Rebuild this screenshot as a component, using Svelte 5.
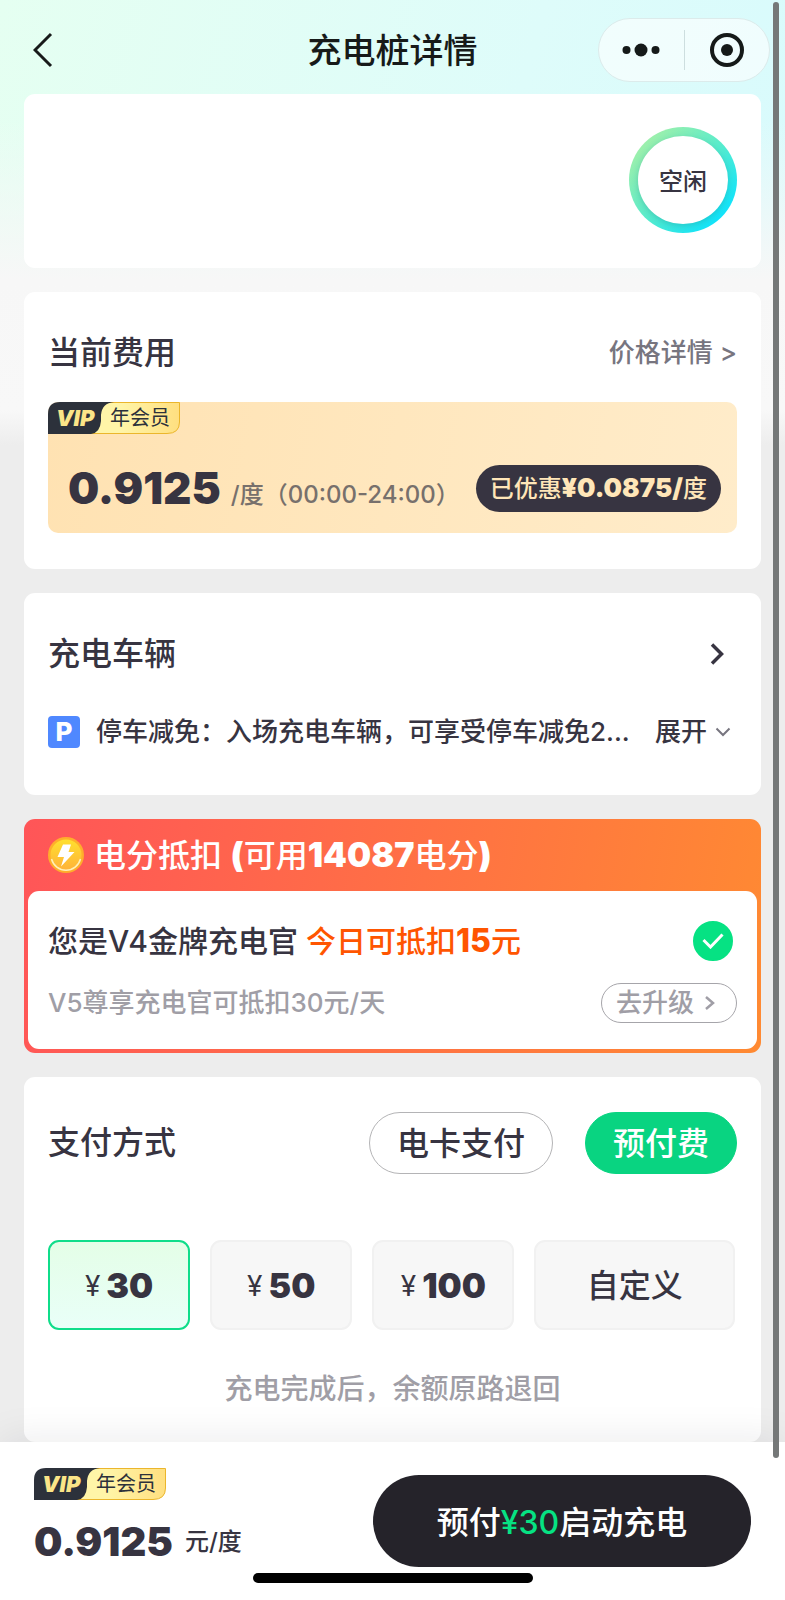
<script lang="ts">
  export let price: string = "0.9125";
  export let discount: string = "0.0875";
  export let points: number = 14087;

  const amounts: Array<number> = [30, 50, 100];
  const methods: Array<string> = ["电卡支付", "预付费"];

  let amount: number = 30;
  let method: string = "预付费";
  let usePoints: boolean = true;
</script>

{#snippet vipBadge()}
  <span class="badge">
    <svg class="badge-bg" viewBox="0 0 132 32" aria-hidden="true">
      <defs>
        <linearGradient id="badge-gold" x1="0" x2="1">
          <stop offset="0.35" stop-color="#fff5a8" />
          <stop offset="1" stop-color="#ffdf80" />
        </linearGradient>
      </defs>
      <path d="M40 .5H131.500V20Q131.500 31.500 119 31.500H40Z" fill="url(#badge-gold)" stroke="#ebb62c" />
      <path d="M12 0H66Q54 1 53 13V19Q52 31 43 32H0V12Q0 0 12 0Z" fill="#2c313b" />
    </svg>
    <b>VIP</b>
    <span class="badge-label">年会员</span>
  </span>
{/snippet}

<div class="page">
  <header>
    <button class="back" aria-label="返回">
      <svg width="20" height="36" viewBox="0 0 20 36"><path d="M18 2L2 18L18 34" fill="none" stroke="#171a19" stroke-width="3" /></svg>
    </button>
    <h1>充电桩详情</h1>
    <div class="capsule">
      <button aria-label="更多">
        <svg width="38" height="14" viewBox="0 0 38 14" fill="#151a19">
          <circle cx="4.500" cy="7" r="4" />
          <circle cx="19" cy="7" r="6.500" />
          <circle cx="33.500" cy="7" r="4" />
        </svg>
      </button>
      <i></i>
      <button aria-label="关闭">
        <svg width="36" height="36" viewBox="0 0 36 36">
          <circle cx="18" cy="18" r="15" fill="none" stroke="#151a19" stroke-width="4" />
          <circle cx="18" cy="18" r="6" fill="#151a19" />
        </svg>
      </button>
    </div>
  </header>

  <main>
    <section class="card status">
      <div class="ring"><span>空闲</span></div>
    </section>

    <section class="card fee">
      <div class="row">
        <h2>当前费用</h2>
        <a class="detail" href="#price">价格详情 &gt;</a>
      </div>
      <div class="gold">
        {@render vipBadge()}
        <div class="gold-row">
          <strong>{price}</strong>
          <span class="period">/度（00:00-24:00）</span>
          <span class="saved">已优惠<b>¥{discount}/</b>度</span>
        </div>
      </div>
    </section>

    <section class="card car">
      <div class="row">
        <h2>充电车辆</h2>
        <button class="go" aria-label="选择车辆">
          <svg width="14" height="22" viewBox="0 0 14 22"><path d="M2 1.500L11.500 11L2 20.500" fill="none" stroke="#373441" stroke-width="3.500" /></svg>
        </button>
      </div>
      <div class="parking">
        <span class="p-icon">P</span>
        <p>停车减免：入场充电车辆，可享受停车减免2...</p>
        <button class="expand">
          展开
          <svg width="16" height="10" viewBox="0 0 16 10"><path d="M1.500 1.500L8 8L14.500 1.500" fill="none" stroke="#77757f" stroke-width="2" /></svg>
        </button>
      </div>
    </section>

    <section class="points">
      <div class="points-head">
        <svg width="36" height="36" viewBox="0 0 36 36" aria-hidden="true">
          <defs>
            <linearGradient id="coin" x1="0" y1="0" x2="0" y2="1">
              <stop offset="0" stop-color="#ffe02e" />
              <stop offset="1" stop-color="#ffb23a" />
            </linearGradient>
          </defs>
          <circle cx="18" cy="18" r="18" fill="#ffae2b" />
          <circle cx="18" cy="18" r="15.500" fill="url(#coin)" />
          <path d="M3.500 22A15 15 0 0 0 32.500 22" fill="none" stroke="#fff0b8" stroke-width="1.500" />
          <path d="M15 7.500H23L20.500 15H26.500L13 29.500L16 20H9.500Z" fill="#fff" />
        </svg>
        <h2>电分抵扣 <b>(</b>可用<b>{points}</b>电分<b>)</b></h2>
      </div>
      <div class="points-body">
        <div class="row">
          <label for="use-points">您是V4金牌充电官 <em>今日可抵扣<b>15</b>元</em></label>
          <span class="check">
            <input id="use-points" type="checkbox" bind:checked={usePoints} />
            {#if usePoints}
              <svg width="22" height="16" viewBox="0 0 22 16"><path d="M1.500 7L8.500 14L20.500 1.500" fill="none" stroke="#fff" stroke-width="3" /></svg>
            {/if}
          </span>
        </div>
        <div class="row next">
          <span>V5尊享充电官可抵扣30元/天</span>
          <button class="upgrade">
            去升级
            <svg width="12" height="14" viewBox="0 0 12 14"><path d="M2 1L9 7L2 13" fill="none" stroke="#a09ea6" stroke-width="2.500" /></svg>
          </button>
        </div>
      </div>
    </section>

    <section class="card pay">
      <div class="row">
        <h2>支付方式</h2>
        <div class="methods">
          {#each methods as m}
            <button class:isActive={method === m} on:click={() => (method = m)}>{m}</button>
          {/each}
        </div>
      </div>
      <div class="amounts">
        {#each amounts as value (value)}
          <button class:isActive={amount === value} on:click={() => (amount = value)}>
            <span>¥</span><b>{value}</b>
          </button>
        {/each}
        <button class="custom">自定义</button>
      </div>
      <p class="hint">充电完成后，余额原路退回</p>
    </section>
  </main>

  <footer>
    <div class="footer-row">
      <div class="total">
        {@render vipBadge()}
        <div class="total-price"><strong>{price}</strong><span>元/度</span></div>
      </div>
      <button class="start">预付<span>¥{amount}</span>启动充电</button>
    </div>
    <div class="home-bar"></div>
  </footer>

  <div class="scrollbar"></div>
</div>

<style>
  :global(body) {
    margin: 0;
    background: #ededed;
  }

  .page {
    min-height: 100vh;
    display: flex;
    flex-direction: column;
    font-family: Inter, "Noto Sans CJK SC", sans-serif;
    font-weight: 500;
    color: #373441;
    background:
      linear-gradient(to bottom, rgba(247, 247, 247, 0) 120px, #f7f7f7 280px, #f8f8f8 410px, #ededed 445px),
      linear-gradient(105deg, #e5fff1 0%, #defcfa 45%, #d2f9ff 100%);
  }

  button {
    border: 0;
    padding: 0;
    background: transparent;
    font: inherit;
    color: inherit;
    cursor: pointer;
  }

  svg {
    display: block;
    flex: none;
  }

  h1,
  h2,
  p {
    margin: 0;
    font-weight: 500;
  }

  h2 {
    font-size: 32px;
    line-height: 46px;
  }

  /* top bar */
  header {
    display: grid;
    grid-template-columns: 1fr auto 1fr;
    align-items: center;
    height: 64px;
    padding: 18px 15px 12px 33px;
  }

  .back {
    justify-self: start;
  }

  h1 {
    font-size: 34px;
    line-height: 48px;
    color: #171a19;
    padding: 2px 18px 0 0;
  }

  .capsule {
    justify-self: end;
    display: flex;
    align-items: center;
    box-sizing: border-box;
    width: 172px;
    height: 64px;
    border: 1px solid #dcebeb;
    border-radius: 32px;
    background: rgba(255, 255, 255, 0.6);
  }

  .capsule button {
    flex: 1;
    display: flex;
    justify-content: center;
  }

  .capsule i {
    width: 1px;
    height: 40px;
    background: #cddedf;
  }

  /* cards */
  main {
    flex: 1;
    display: flex;
    flex-direction: column;
    gap: 24px;
    padding: 0 24px;
  }

  .card {
    background: #fff;
    border-radius: 11px;
    padding: 0 24px;
  }

  .row {
    display: flex;
    align-items: center;
    justify-content: space-between;
  }

  .status {
    display: flex;
    justify-content: flex-end;
    padding-top: 33px;
    padding-bottom: 35px;
  }

  .ring {
    box-sizing: border-box;
    width: 108px;
    height: 106px;
    padding: 9px;
    border-radius: 50%;
    background: linear-gradient(135deg, #a5f0a8 10%, #5aeccb 50%, #12e4fb 85%);
  }

  .ring span {
    display: flex;
    align-items: center;
    justify-content: center;
    box-sizing: border-box;
    height: 100%;
    padding-top: 4px;
    border-radius: 50%;
    background: #fff;
    box-shadow: 0 2px 6px rgba(20, 130, 130, 0.3);
    font-size: 24px;
    line-height: 32px;
  }

  .fee {
    padding-top: 38px;
    padding-bottom: 36px;
  }

  .detail {
    font-size: 26px;
    line-height: 36px;
    color: #77757f;
    text-decoration: none;
  }

  .gold {
    margin-top: 26px;
    height: 131px;
    border-radius: 10px;
    background: linear-gradient(100deg, #ffe2b2, #ffecca);
  }

  .gold-row {
    display: flex;
    align-items: center;
    padding: 30px 16px 0 20px;
  }

  .gold-row strong {
    font-size: 44px;
    line-height: 48px;
    font-weight: 900;
  }

  .period {
    padding: 14px 0 0 10px;
    font-size: 24px;
    line-height: 32px;
    color: #77706c;
    white-space: nowrap;
  }

  .saved {
    margin-left: auto;
    padding: 0 14px;
    border-radius: 24px;
    background: #373441;
    color: #ffe6b8;
    font-size: 24px;
    line-height: 46px;
    white-space: nowrap;
  }

  .saved b {
    font-size: 26px;
    font-weight: 900;
  }

  .badge {
    position: relative;
    display: flex;
    align-items: center;
    width: 132px;
    height: 32px;
  }

  .badge-bg {
    position: absolute;
    width: 132px;
    height: 32px;
  }

  .badge b {
    position: relative;
    width: 54px;
    padding-left: 8px;
    font-size: 22px;
    font-weight: 900;
    font-style: italic;
    line-height: 32px;
    color: #fbe588;
  }

  .badge-label {
    position: relative;
    font-size: 20px;
    font-weight: 400;
    line-height: 32px;
    color: #2c313b;
  }

  .car {
    padding-top: 38px;
    padding-bottom: 42px;
  }

  .go {
    padding: 0 13px;
  }

  .parking {
    display: flex;
    align-items: center;
    margin-top: 34px;
    font-size: 26px;
    line-height: 42px;
  }

  .p-icon {
    width: 32px;
    height: 32px;
    border-radius: 4px;
    background: #4f88ff;
    color: #fff;
    font-size: 26px;
    font-weight: 800;
    line-height: 32px;
    text-align: center;
  }

  .parking p {
    flex: 1;
    min-width: 0;
    padding-left: 16px;
    overflow: hidden;
    white-space: nowrap;
  }

  .expand {
    display: flex;
    align-items: center;
    gap: 8px;
    padding-right: 6px;
  }

  /* points deduction */
  .points {
    padding: 0 4px 4px;
    border-radius: 11px;
    background: linear-gradient(100deg, #ff5558, #ff8a32);
  }

  .points-head {
    display: flex;
    align-items: center;
    gap: 10px;
    height: 72px;
    padding: 0 20px;
    color: #fff;
  }

  .points-head b {
    font-size: 34px;
    font-weight: 900;
  }

  .points-body {
    border-radius: 11px;
    background: #fff;
    padding: 28px 20px 26px;
  }

  .points-body label {
    font-size: 30px;
    line-height: 44px;
  }

  .points-body em {
    font-style: normal;
    color: #ff5500;
  }

  .points-body em b {
    font-size: 32px;
    font-weight: 800;
  }

  .check {
    position: relative;
    width: 40px;
    height: 40px;
    margin-right: 4px;
  }

  .check input {
    appearance: none;
    display: block;
    box-sizing: border-box;
    width: 40px;
    height: 40px;
    margin: 0;
    border: 2px solid #c8c8cc;
    border-radius: 50%;
  }

  .check input:checked {
    border-color: #06e283;
    background: #06e283;
  }

  .check svg {
    position: absolute;
    top: 12px;
    left: 9px;
    pointer-events: none;
  }

  .next {
    margin-top: 20px;
    font-size: 26px;
    line-height: 36px;
    color: #a09ea6;
  }

  .upgrade {
    display: flex;
    align-items: center;
    gap: 10px;
    box-sizing: border-box;
    height: 40px;
    padding: 0 20px 0 14px;
    border: 1px solid #a6a5aa;
    border-radius: 20px;
  }

  /* payment */
  .pay {
    padding-top: 35px;
    padding-bottom: 33px;
  }

  .methods {
    display: flex;
    gap: 32px;
  }

  .methods button {
    height: 62px;
    padding: 2px 27px 0;
    border: 1px solid #b4b4b6;
    border-radius: 31px;
    font-size: 32px;
    line-height: 46px;
    box-sizing: border-box;
  }

  .methods .isActive {
    border-color: #09d481;
    background: #09d481;
    color: #fff;
  }

  .amounts {
    display: flex;
    gap: 20px;
    margin-top: 66px;
    padding-right: 2px;
  }

  .amounts button {
    flex: 142 1 0;
    box-sizing: border-box;
    height: 90px;
    padding-top: 2px;
    display: flex;
    align-items: center;
    justify-content: center;
    gap: 6px;
    border: 2px solid #f1f1f1;
    border-radius: 11px;
    background: #f7f7f7;
    font-size: 32px;
    line-height: 46px;
  }

  .amounts .custom {
    flex-grow: 202;
  }

  .amounts .isActive {
    border-color: #0fdd8a;
    background: linear-gradient(to bottom, #e4fee7, #e9fff8);
  }

  .amounts span {
    font-size: 28px;
    font-weight: 400;
  }

  .amounts b {
    font-size: 34px;
    font-weight: 900;
  }

  .hint {
    margin-top: 39px;
    font-size: 28px;
    line-height: 40px;
    text-align: center;
    color: #a09ea6;
  }

  /* bottom bar */
  footer {
    position: sticky;
    bottom: 0;
    padding: 26px 34px 17px;
    background: #fff;
    box-shadow: 0 -4px 36px rgba(30, 30, 40, 0.08);
  }

  .footer-row {
    display: flex;
    align-items: flex-start;
    justify-content: space-between;
  }

  .total-price {
    display: flex;
    align-items: center;
    gap: 12px;
    margin-top: 22px;
    font-size: 24px;
    line-height: 40px;
  }

  .total-price strong {
    font-size: 40px;
    font-weight: 900;
  }

  .start {
    width: 378px;
    height: 92px;
    margin-top: 7px;
    padding-top: 4px;
    border-radius: 46px;
    background: #25232a;
    color: #fff;
    font-size: 32px;
    line-height: 46px;
  }

  .start span {
    color: #06e283;
  }

  .home-bar {
    width: 280px;
    height: 10px;
    margin: 6px auto 0;
    border-radius: 5px;
    background: #000;
  }

  .scrollbar {
    position: fixed;
    top: 2px;
    right: 6px;
    width: 6px;
    height: 91vh;
    border-radius: 3px;
    background: #757878;
  }
</style>
